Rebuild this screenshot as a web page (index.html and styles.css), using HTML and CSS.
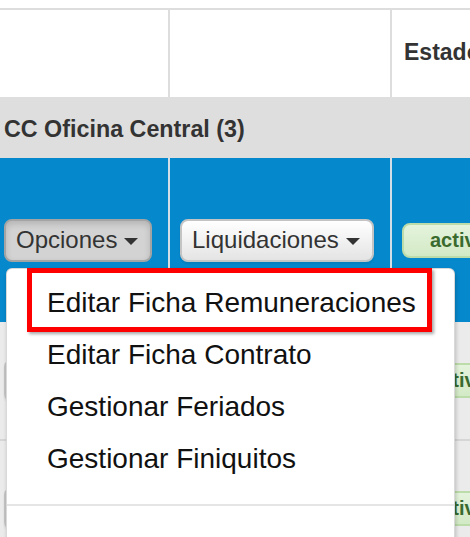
FILE: index.html
```html
<!DOCTYPE html>
<html lang="es">
<head>
<meta charset="utf-8">
<title>Tabla</title>
<link rel="stylesheet" href="styles.css">
</head>
<body>
<div class="table">
  <div class="row head">
    <div class="cell"></div>
    <div class="cell"></div>
    <div class="cell th">Estado</div>
  </div>
  <div class="group">CC Oficina Central (3)</div>
  <div class="row data selected">
    <div class="cell c1">
      <div class="btn-group">
        <button class="btn active">Opciones <span class="caret"></span></button>
        <ul class="menu">
          <li class="highlight-wrap"><a>Editar Ficha Remuneraciones</a><span class="highlight"></span></li>
          <li><a>Editar Ficha Contrato</a></li>
          <li><a>Gestionar Feriados</a></li>
          <li><a>Gestionar Finiquitos</a></li>
          <li class="divider"></li>
        </ul>
      </div>
    </div>
    <div class="cell c2"><button class="btn">Liquidaciones <span class="caret"></span></button></div>
    <div class="cell c3"><span class="badge">activo</span></div>
  </div>
  <div class="row data r1">
    <div class="cell c1"><button class="btn">Opciones <span class="caret"></span></button></div>
    <div class="cell c2"><button class="btn">Liquidaciones <span class="caret"></span></button></div>
    <div class="cell c3"><span class="badge">activo</span></div>
  </div>
  <div class="row data r2">
    <div class="cell c1"><button class="btn">Opciones <span class="caret"></span></button></div>
    <div class="cell c2"><button class="btn">Liquidaciones <span class="caret"></span></button></div>
    <div class="cell c3"><span class="badge">activo</span></div>
  </div>
</div>
</body>
</html>
```
FILE: styles.css
```css
* { box-sizing: border-box; }
html, body { margin: 0; padding: 0; background: #fff; overflow: hidden; }
body {
  font-family: "Liberation Sans", Arial, sans-serif;
  color: #333;
  width: 470px;
  height: 537px;
}
.table {
  margin-top: 8px;
  border-top: 2px solid #dddddd;
  width: 560px;
}
.row {
  display: grid;
  grid-template-columns: 168px 222px 1fr;
}
.cell + .cell { border-left: 2px solid #dddddd; }
.head { height: 87px; }
.th {
  display: flex;
  align-items: center;
  padding-left: 12px;
  padding-bottom: 3px;
  font-weight: bold;
  font-size: 23px;
  color: #333;
}
.group {
  height: 61px;
  background: #dedede;
  display: flex;
  align-items: center;
  padding-left: 4px;
  padding-top: 3px;
  font-weight: bold;
  font-size: 23.3px;
  color: #333;
}
.data .cell {
  display: flex;
  align-items: center;
}
.data .c1 { padding-left: 4px; }
.data .c2 { padding-left: 10px; }
.data .c3 { padding-left: 10px; }
.selected { height: 164px; background: #0688cc; }
.selected .cell + .cell { border-left-color: #d3dee6; }
.r1 { height: 119px; background: #ebebeb; border-bottom: 2px solid #d6d6d6; }
.r2 { height: 134px; background: #ebebeb; }
.r1 .cell + .cell, .r2 .cell + .cell { border-left-color: #dcdcdc; }

.btn {
  height: 43px;
  font-family: "Liberation Sans", Arial, sans-serif;
  font-size: 24px;
  color: #333;
  padding: 0 12px 0 10px;
  border: 2px solid #c4c4c4;
  border-radius: 8px;
  background: linear-gradient(#ffffff, #e4e4e4);
  box-shadow: 0 2px 2px rgba(0,0,0,0.08);
  display: inline-flex;
  align-items: center;
  gap: 7px;
  white-space: nowrap;
}
.btn.active {
  background: #d3d3d3;
  border-color: #a4a4a4;
  box-shadow: inset 0 3px 6px rgba(0,0,0,0.15);
}
.caret {
  display: inline-block;
  width: 0;
  height: 0;
  border-top: 7px solid #333;
  border-left: 7px solid transparent;
  border-right: 7px solid transparent;
  margin-top: 2px;
}
.badge {
  display: inline-flex;
  align-items: center;
  height: 35px;
  padding: 0 26px;
  border: 2px solid #bcdca9;
  border-radius: 8px;
  background: linear-gradient(#e4f3dc, #d3eac6);
  color: #3a6a2e;
  font-weight: bold;
  font-size: 20px;
}

.btn-group { position: relative; }
.menu {
  position: absolute;
  left: 2px;
  top: calc(100% + 6px);
  width: 449px;
  height: 320px;
  margin: 0;
  padding: 8px 0 0;
  list-style: none;
  background: #fff;
  border: 1px solid rgba(0,0,0,0.15);
  border-radius: 6px;
  box-shadow: 1px 3px 4px rgba(0,0,0,0.2);
  z-index: 10;
}
.menu li a {
  display: block;
  padding: 6px 40px;
  line-height: 40px;
  font-size: 28px;
  color: #111;
  white-space: nowrap;
}
.menu .divider {
  height: 2px;
  background: #e5e5e5;
  margin: 19px 0;
}
.highlight {
  position: absolute;
  left: 20px;
  top: -1px;
  width: 405px;
  height: 64px;
  border: 5px solid #ff0000;
  box-shadow: 2px 2px 3px rgba(0,0,0,0.35);
  pointer-events: none;
}
```
